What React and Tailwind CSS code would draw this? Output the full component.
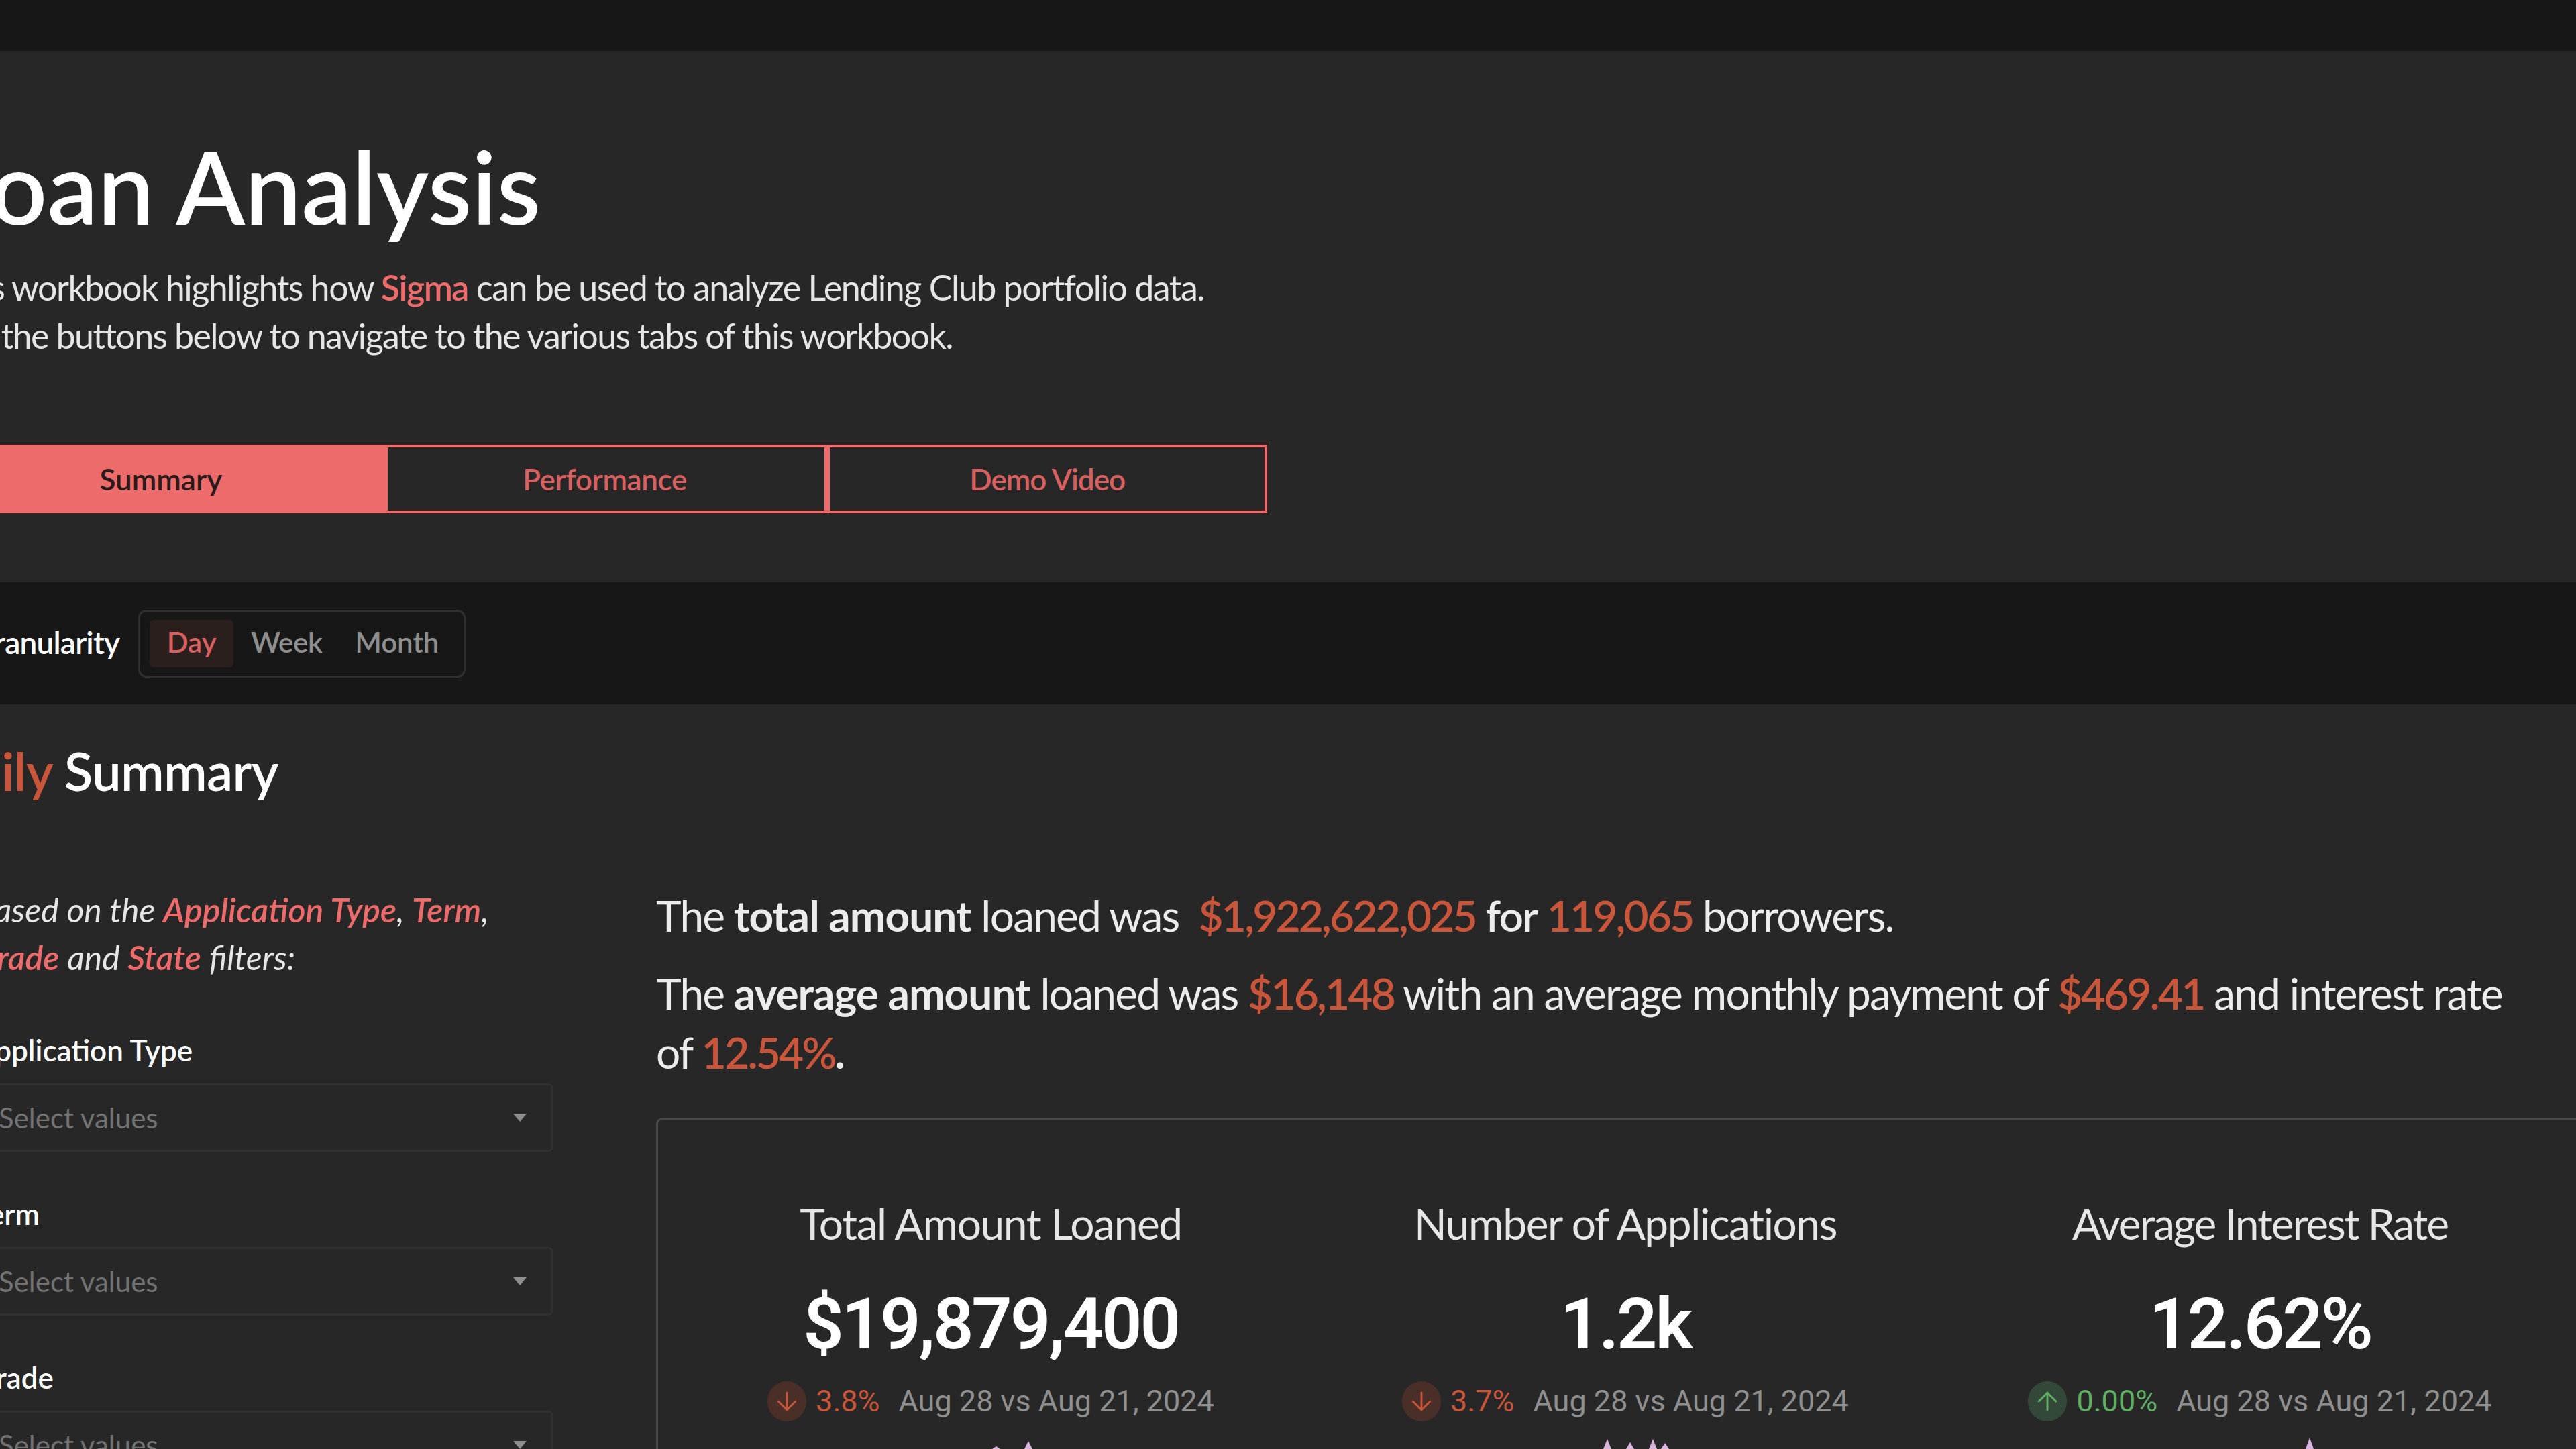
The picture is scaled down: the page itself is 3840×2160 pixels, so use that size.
import { ArrowDown, ArrowUp } from "lucide-react";

const kpis = [
  { title: "Total Amount Loaned", titleClass: "tracking-[-1.4px]", value: "$19,879,400", delta: "3.8%", up: false },
  { title: "Number of Applications", titleClass: "tracking-[-1.4px]", value: "1.2k", delta: "3.7%", up: false },
  { title: "Average Interest Rate", titleClass: "tracking-[-2.1px]", value: "12.62%", delta: "0.00%", up: true },
];

const filters = ["Application Type", "Term", "Grade", "State"];

const Hi = ({ children }) => <span className="text-[#c9553a] font-semibold tracking-[-2.8px]">{children}</span>;

const Kpi = ({ kpi, spikes }) => (
  <div className="flex flex-col items-center">
    <div className={`text-[64px] leading-[80px] text-[#e6e6e6] ${kpi.titleClass}`}>{kpi.title}</div>
    <div className="mt-[50px] text-[106px] leading-[120px] tracking-[-3.2px] font-semibold text-white font-['Roboto',sans-serif]">{kpi.value}</div>
    <div className="mt-[25px] flex items-center font-['Roboto',sans-serif] text-[45px] leading-[60px]">
      <span className={kpi.up ? "flex h-[60px] w-[58px] items-center justify-center rounded-full bg-[#34483a] text-[#5fae63]" : "flex h-[60px] w-[58px] items-center justify-center rounded-full bg-[#4a2e28] text-[#c9553a]"}>
        {kpi.up ? <ArrowUp size={44} strokeWidth={1.6} /> : <ArrowDown size={44} strokeWidth={1.6} />}
      </span>
      <span className={kpi.up ? "ml-[14px] text-[#5fae63]" : "ml-[14px] text-[#c9553a]"}>{kpi.delta}</span>
      <span className="ml-[28px] text-[#8f8f8f]">Aug 28 vs Aug 21, 2024</span>
    </div>
    <svg width="300" height="17" viewBox="0 0 300 17" className="mt-[24px]">
      <path d={spikes} fill="#d8b4dc" />
    </svg>
  </div>
);

export default function App() {
  return (
    <div className="h-[2160px] w-[3840px] overflow-hidden bg-[#272727] font-['Lato',sans-serif] text-white">
      <div className="h-[76px] bg-[#171717]" />

      <header className="-ml-[82px] h-[792px] pt-[111px]">
        <h1 className="-ml-[6px] text-[150px] leading-[180px] font-semibold">Loan Analysis</h1>
        <div className="text-[52px] leading-[72px] tracking-[-1.5px] text-[#e6e6e6]">
          <p className="mt-[25px]">
            This workbook highlights how <span className="font-semibold text-[#ee6b6b]">Sigma</span> can be used to analyze Lending Club portfolio data.
          </p>
          <p className="-ml-[10px] tracking-[-1.64px]">Use the buttons below to navigate to the various tabs of this workbook.</p>
        </div>
        <div className="-ml-[6px] mt-[127px] flex w-[1977px]">
          <button className="h-[102px] flex-1 border-[4px] border-[#ee6b6b] bg-[#ee6b6b] pr-[6px] text-[44px] font-semibold text-[#2a1a1a]">Summary</button>
          <button className="h-[102px] flex-1 border-[4px] border-[#ee6b6b] pr-[4px] text-[44px] tracking-[-0.4px] font-semibold text-[#d96060]">Performance</button>
          <button className="h-[102px] flex-1 border-[4px] border-[#ee6b6b] text-[44px] tracking-[-1px] font-semibold text-[#d96060]">Demo Video</button>
        </div>
      </header>

      <div className="-ml-[41px] flex h-[182px] items-center bg-[#171717]">
        <span className="pb-[3px] text-[46px] tracking-[-0.8px] font-semibold">Granularity</span>
        <div className="ml-[28px] flex h-[101px] w-[488px] items-center rounded-[12px] border-[3px] border-[#303030] px-[14px] text-[42px] font-semibold text-[#8f8f8f]">
          <span className="flex h-[71px] w-[125px] items-center justify-center rounded-[6px] bg-[#2b1f1e] pb-[3px] text-[#d96060]">Day</span>
          <span className="ml-[26px] pb-[3px] tracking-[-0.4px]">Week</span>
          <span className="ml-[49px] pb-[3px]">Month</span>
        </div>
      </div>

      <section className="-ml-[82px]">
        <h2 className="-ml-[12px] mt-[49px] text-[78px] leading-[100px] tracking-[-0.7px] font-semibold">
          <span className="text-[#c9553a]">Daily</span> Summary
        </h2>
        <div className="mt-[122px] flex">
          <aside className="w-[906px] shrink-0">
            <p className="pl-[44px] text-[50px] leading-[71px] italic text-[#e6e6e6]">
              Based on the <span className="font-semibold text-[#ee6b6b]">Application Type</span>, <span className="font-semibold text-[#ee6b6b]">Term</span>,
              <br />
              <span className="font-semibold text-[#ee6b6b]">Grade</span> and <span className="font-semibold text-[#ee6b6b]">State</span> filters:
            </p>
            <div className="mt-[72px] flex flex-col gap-[62px]">
              {filters.map((f) => (
                <div key={f}>
                  <div className="pl-[44px] text-[44px] leading-[60px] font-semibold">{f}</div>
                  <div className="mt-[20px] flex h-[102px] items-center justify-between rounded-[6px] border-[3px] border-[#303030] pl-[77px] pr-[36px] text-[42px] text-[#727272]">
                    Select values
                    <span className="h-0 w-0 border-x-[10px] border-t-[12px] border-x-transparent border-t-[#8f8f8f]" />
                  </div>
                </div>
              ))}
            </div>
          </aside>
          <main className="ml-[154px] w-[2892px] shrink-0">
            <div className="pr-[110px] text-[64px] leading-[88px] tracking-[-1.8px] text-[#ececec]">
              <p>The <b className="font-bold tracking-[-1px]">total amount</b> loaned was&nbsp; <Hi>$1,922,622,025</Hi> <b className="font-semibold">for</b> <Hi>119,065</Hi> borrowers.</p>
              <p className="mt-[28px]">The <b className="font-bold tracking-[-1px]">average amount</b> loaned was <Hi>$16,148</Hi> with an average monthly payment of <Hi>$469.41</Hi> and interest rate of <Hi>12.54%</Hi><b>.</b></p>
            </div>
            <div className="mt-[54px] h-[900px] rounded-[8px] border-[3px] border-[#484848] pt-[114px] pl-[23px]">
              <div className="grid w-[2838px] grid-cols-3">
                <Kpi kpi={kpis[0]} spikes="M152 17 L158 13 L164 17 Z M200 17 L206 5 L212 17 Z" />
                <Kpi kpi={kpis[1]} spikes="M117 17 L123 2 L129 17 Z M151 17 L157 7 L163 17 Z M185 17 L191 2 L197 17 Z M203 17 L209 8 L215 17 Z" />
                <Kpi kpi={kpis[2]} spikes="M218 17 L224 0 L230 17 Z" />
              </div>
            </div>
          </main>
        </div>
      </section>
    </div>
  );
}
